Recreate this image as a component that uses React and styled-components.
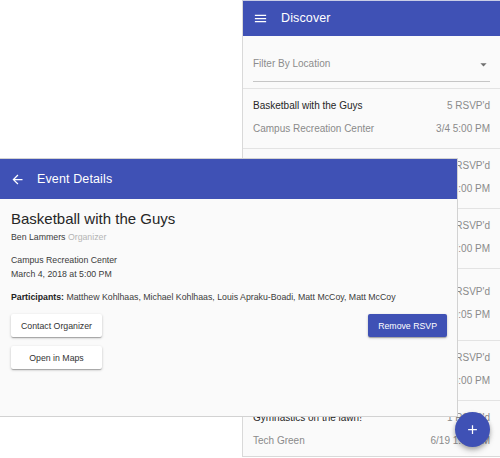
import React from "react";
import styled, { createGlobalStyle } from "styled-components";

const GlobalStyle = createGlobalStyle`
  html, body { margin: 0; padding: 0; background: #ffffff; }
  body { font-family: "Liberation Sans", Arial, sans-serif; -webkit-font-smoothing: antialiased; }
  * { box-sizing: border-box; }
`;

const BLUE = "#3f51b5";

const Stage = styled.div`
  position: relative;
  width: 500px;
  height: 458px;
  overflow: hidden;
  background: #ffffff;
`;

const DiscoverPanel = styled.section`
  margin-left: 242px;
  width: 258px;
  height: 457px;
  background: #fafafa;
  border: 1px solid #d9d9d9;
  border-right: none;
  border-top-color: #c9cde6;
  display: flex;
  flex-direction: column;
  overflow: hidden;
`;

const AppBar = styled.header`
  flex: none;
  height: ${(p) => p.$height}px;
  background: ${BLUE};
  color: #fff;
  display: flex;
  align-items: center;
  padding-left: 10px;
  gap: ${(p) => p.$gap}px;
`;

const BarIcon = styled.svg`
  width: 15px;
  height: 15px;
  fill: #fff;
  flex: none;
`;

const BarTitle = styled.h1`
  margin: 0;
  font-size: 12.5px;
  font-weight: 500;
  line-height: 1;
  letter-spacing: 0.01em;
`;

const FilterArea = styled.div`
  padding: 22px 10px 6px;
`;

const SelectField = styled.div`
  display: flex;
  align-items: center;
  justify-content: space-between;
  height: 24px;
  padding-bottom: 11px;
  border-bottom: 1px solid #c6c6c6;
`;

const Placeholder = styled.span`
  font-size: 10px;
  line-height: 12px;
  color: #8c8c8c;
`;

const DropIcon = styled.svg`
  width: 15px;
  height: 15px;
  fill: #6f6f6f;
  margin-right: -1px;
`;

const EventList = styled.ul`
  list-style: none;
  margin: 0;
  padding: 0;
`;

const EventItem = styled.li`
  display: flex;
  align-items: center;
  justify-content: space-between;
  gap: 12px;
  padding: 11px 10px 13px;
  border-top: 1px solid #e3e3e3;
`;

const ItemColumn = styled.div`
  display: flex;
  flex-direction: column;
  gap: 11px;
  align-items: ${(p) => (p.$end ? "flex-end" : "flex-start")};
  flex: ${(p) => (p.$end ? "none" : "1 1 auto")};
  min-width: 0;
`;

const Primary = styled.span`
  font-size: 10px;
  line-height: 12px;
  color: ${(p) => (p.$muted ? "#8a8a8a" : "#262626")};
  white-space: ${(p) => (p.$end ? "nowrap" : "normal")};
`;

const Secondary = styled.span`
  font-size: 10px;
  line-height: 12px;
  color: #8a8a8a;
  white-space: nowrap;
`;

const DetailsWindow = styled.section`
  position: absolute;
  left: 0;
  top: 158px;
  width: 458px;
  height: 259px;
  background: #fafafa;
  border: 1px solid #d2d2d2;
  border-left: none;
  display: flex;
  flex-direction: column;
`;

const DetailsBody = styled.div`
  padding: 10px 10px 0 11px;
  display: flex;
  flex-direction: column;
`;

const EventTitle = styled.h2`
  margin: 0;
  font-size: 15px;
  line-height: 20px;
  font-weight: 400;
  color: #262626;
`;

const Organizer = styled.p`
  margin: 2px 0 0;
  font-size: 8.75px;
  line-height: 13px;
  color: #3a3a3a;
`;

const Role = styled.span`
  color: #b5b5b5;
`;

const InfoBlock = styled.div`
  margin-top: 10px;
  display: flex;
  flex-direction: column;
`;

const InfoLine = styled.p`
  margin: 0;
  font-size: 8.75px;
  line-height: 13.5px;
  color: #3a3a3a;
`;

const Strong = styled.b`
  font-weight: 700;
  color: #222;
`;

const Actions = styled.div`
  margin-top: 9.5px;
  display: flex;
  justify-content: space-between;
  align-items: flex-start;
`;

const ButtonStack = styled.div`
  display: inline-flex;
  flex-direction: column;
  gap: 9px;
`;

const RaisedButton = styled.button`
  height: 23px;
  padding: 0 10px;
  border: none;
  border-radius: 2px;
  font-family: inherit;
  font-size: 8.75px;
  font-weight: 500;
  cursor: pointer;
  background: ${(p) => (p.$primary ? BLUE : "#ffffff")};
  color: ${(p) => (p.$primary ? "#ffffff" : "#333333")};
  box-shadow: 0 1px 3px rgba(0, 0, 0, 0.2), 0 1px 1px rgba(0, 0, 0, 0.14),
    0 2px 1px -1px rgba(0, 0, 0, 0.12);
`;

const Fab = styled.button`
  position: absolute;
  right: 10px;
  bottom: 11px;
  width: 35px;
  height: 35px;
  border-radius: 50%;
  border: none;
  padding: 0;
  background: ${BLUE};
  display: flex;
  align-items: center;
  justify-content: center;
  box-shadow: 0 2px 4px rgba(0, 0, 0, 0.25), 0 4px 6px rgba(0, 0, 0, 0.14);
`;

const MenuIcon = () => (
  <BarIcon viewBox="0 0 24 24">
    <path d="M3 18h18v-2H3v2zm0-5h18v-2H3v2zm0-7v2h18V6H3z" />
  </BarIcon>
);

const BackIcon = () => (
  <BarIcon viewBox="0 0 24 24">
    <path d="M20 11H7.83l5.59-5.59L12 4l-8 8 8 8 1.41-1.41L7.83 13H20v-2z" />
  </BarIcon>
);

const events = [
  { title: "Basketball with the Guys", place: "Campus Recreation Center", rsvp: "5 RSVP'd", when: "3/4 5:00 PM" },
  { title: "Ultimate Frisbee Pickup", place: "Intramural Fields", rsvp: "3 RSVP'd", when: "3/6 4:00 PM" },
  { title: "Study Group: Calculus II", place: "Main Library", rsvp: "4 RSVP'd", when: "3/8 7:00 PM" },
  { title: "Soccer Finals Watch Party at the Union", place: "Student Union", rsvp: "8 RSVP'd", when: "3/10 9:05 PM" },
  { title: "Board Game Night", place: "Student Center", rsvp: "6 RSVP'd", when: "3/12 8:00 PM" },
  { title: "Gymnastics on the lawn!", place: "Tech Green", rsvp: "1 RSVP'd", when: "6/19 1:00 PM" },
];

export default function App() {
  return (
    <>
      <GlobalStyle />
      <Stage>
        <DiscoverPanel>
          <AppBar $height={35} $gap={13}>
            <MenuIcon />
            <BarTitle>Discover</BarTitle>
          </AppBar>
          <FilterArea>
            <SelectField>
              <Placeholder>Filter By Location</Placeholder>
              <DropIcon viewBox="0 0 24 24">
                <path d="M7 10l5 5 5-5z" />
              </DropIcon>
            </SelectField>
          </FilterArea>
          <EventList>
            {events.map((e) => (
              <EventItem key={e.title}>
                <ItemColumn>
                  <Primary>{e.title}</Primary>
                  <Secondary>{e.place}</Secondary>
                </ItemColumn>
                <ItemColumn $end>
                  <Primary $muted $end>{e.rsvp}</Primary>
                  <Secondary>{e.when}</Secondary>
                </ItemColumn>
              </EventItem>
            ))}
          </EventList>
        </DiscoverPanel>

        <DetailsWindow>
          <AppBar $height={40} $gap={12}>
            <BackIcon />
            <BarTitle>Event Details</BarTitle>
          </AppBar>
          <DetailsBody>
            <EventTitle>Basketball with the Guys</EventTitle>
            <Organizer>
              Ben Lammers <Role>Organizer</Role>
            </Organizer>
            <InfoBlock>
              <InfoLine>Campus Recreation Center</InfoLine>
              <InfoLine>March 4, 2018 at 5:00 PM</InfoLine>
            </InfoBlock>
            <InfoBlock>
              <InfoLine>
                <Strong>Participants:</Strong> Matthew Kohlhaas, Michael Kohlhaas, Louis Apraku-Boadi, Matt McCoy, Matt McCoy
              </InfoLine>
            </InfoBlock>
            <Actions>
              <ButtonStack>
                <RaisedButton>Contact Organizer</RaisedButton>
                <RaisedButton>Open in Maps</RaisedButton>
              </ButtonStack>
              <RaisedButton $primary>Remove RSVP</RaisedButton>
            </Actions>
          </DetailsBody>
        </DetailsWindow>

        <Fab aria-label="Add event">
          <BarIcon viewBox="0 0 24 24">
            <path d="M19 13h-6v6h-2v-6H5v-2h6V5h2v6h6v2z" />
          </BarIcon>
        </Fab>
      </Stage>
    </>
  );
}
